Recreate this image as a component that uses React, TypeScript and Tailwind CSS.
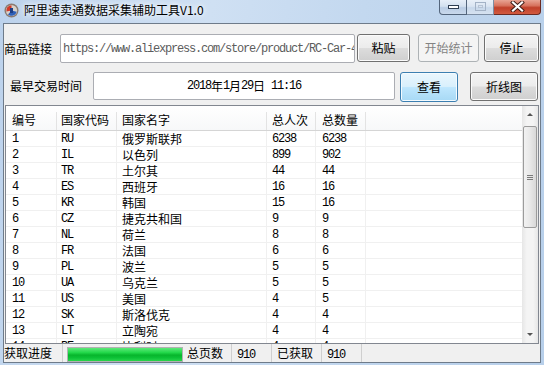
import type { ReactNode } from "react";

const rows = [
  ["1", "RU", "俄罗斯联邦", "6238", "6238"],
  ["2", "IL", "以色列", "899", "902"],
  ["3", "TR", "土尔其", "44", "44"],
  ["4", "ES", "西班牙", "16", "16"],
  ["5", "KR", "韩国", "15", "16"],
  ["6", "CZ", "捷克共和国", "9", "9"],
  ["7", "NL", "荷兰", "8", "8"],
  ["8", "FR", "法国", "6", "6"],
  ["9", "PL", "波兰", "5", "5"],
  ["10", "UA", "乌克兰", "5", "5"],
  ["11", "US", "美国", "4", "5"],
  ["12", "SK", "斯洛伐克", "4", "4"],
  ["13", "LT", "立陶宛", "4", "4"],
  ["14", "BE", "比利时", "4", "4"],
];

const cjk = "font-['Noto_Sans_CJK_SC',sans-serif]";
const mono = "font-['Liberation_Mono','Noto_Sans_CJK_SC',monospace] text-[12px] tracking-[-1.2px]";

const btnNormal =
  "flex items-center justify-center rounded-[3px] border border-[#707070] bg-[linear-gradient(#f4f4f4_0%,#ececec_48%,#dcdcdc_52%,#cfcfcf_100%)] shadow-[inset_0_0_0_1px_#fbfbfb] text-[12px] text-black";

function M({ children }: { children: ReactNode }) {
  return <span className={mono}>{children}</span>;
}

function TitleIcon() {
  return (
    <svg width="15" height="15" viewBox="0 0 15 15">
      <circle cx="7.5" cy="7.5" r="7" fill="#8a7a70" />
      <circle cx="7.5" cy="7.5" r="5.6" fill="#d7d2cc" />
      <path d="M7.5 2.2 A5.3 5.3 0 0 0 2.4 8.6 L7.5 7.5 Z" fill="#d23a2a" />
      <path d="M7.5 7.5 L12.6 8.8 A5.3 5.3 0 0 1 4 11.6 Z" fill="#2e5fb8" />
      <rect x="6" y="5" width="3" height="5" fill="#1e3f86" />
    </svg>
  );
}

function TitleButtons() {
  return (
    <div className="ml-auto mr-[3px] flex self-start">
      <div className="flex h-[15px] w-[28px] items-start justify-center rounded-bl-[4px] border border-t-0 border-[#53657c] bg-[linear-gradient(#e6eef8_0%,#d3e0ef_45%,#b9cce4_55%,#c9d9ec_100%)] pt-[5px]">
        <div className="h-[4px] w-[11px] border border-[#2f3e52] bg-white" />
      </div>
      <div className="flex h-[15px] w-[27px] items-start justify-center border-b border-r border-[#7d8ea4] bg-[linear-gradient(#e9f0f8_0%,#dae5f2_45%,#c8d8eb_55%,#d6e2f0_100%)] pt-[2px]">
        <div className="h-[9px] w-[11px] border border-[#a3b2c6] p-[2px]">
          <div className="h-full w-full border border-[#b7c4d5]" />
        </div>
      </div>
      <div className="flex h-[15px] w-[47px] items-start justify-center rounded-br-[4px] border border-l-0 border-t-0 border-[#6b2a22] bg-[linear-gradient(#e8a493_0%,#d7735e_40%,#c0402a_55%,#d25a3f_100%)] pt-[1px]">
        <svg width="15" height="11" viewBox="0 0 15 11">
          <path d="M3 1.5 L12 9.5 M12 1.5 L3 9.5" stroke="#3b1a14" strokeWidth="4" strokeLinecap="square" />
          <path d="M3 1.5 L12 9.5 M12 1.5 L3 9.5" stroke="#ffffff" strokeWidth="2.2" strokeLinecap="square" />
        </svg>
      </div>
    </div>
  );
}

function ScrollBar() {
  return (
    <div className="flex w-[16px] flex-col bg-[linear-gradient(90deg,#e6e6e6,#f4f4f4_30%,#f4f4f4_70%,#e6e6e6)]">
      <div className="flex h-[17px] items-center justify-center">
        <div className="h-0 w-0 border-x-[3px] border-b-[3px] border-x-transparent border-b-[#555]" />
      </div>
      <div className="mx-[1px] mt-[3px] flex h-[102px] items-center justify-center rounded-[2px] border border-[#9b9b9b] bg-[linear-gradient(90deg,#f2f2f2,#e8e8e8_50%,#d8d8d8)]">
        <div className="flex flex-col gap-[1px]">
          <div className="h-px w-[6px] bg-[#7a7a7a]" />
          <div className="h-px w-[6px] bg-[#7a7a7a]" />
          <div className="h-px w-[6px] bg-[#7a7a7a]" />
        </div>
      </div>
      <div className="flex-1" />
      <div className="flex h-[17px] items-center justify-center">
        <div className="h-0 w-0 border-x-[3px] border-t-[3px] border-x-transparent border-t-[#555]" />
      </div>
    </div>
  );
}

export default function App() {
  return (
    <div className={`flex h-[365px] w-[544px] flex-col overflow-hidden bg-[linear-gradient(100deg,#bcd2ec_0%,#cfe0f3_35%,#c3d8ef_60%,#b7cfea_100%)] ${cjk}`}>
      <div className="flex h-[23px] shrink-0 items-start">
        <div className="ml-[4px] mt-[3px]">
          <TitleIcon />
        </div>
        <div className="ml-[5px] mt-[3px] text-[12px] leading-[14px] text-black [text-shadow:0_0_5px_#fff,0_0_8px_#fff]">
          阿里速卖通数据采集辅助工具V1.0
        </div>
        <TitleButtons />
      </div>

      <div className="mx-[3px] mb-[2px] flex flex-1 flex-col border border-[#6e7b8a] bg-[#f0f0f0] text-[12px] text-black">
        <div className="mt-[10px] flex h-[29px] items-start">
          <div className="flex h-[29px] w-[56px] items-center">商品链接</div>
          <div className="flex h-[29px] w-[295px] items-center overflow-hidden whitespace-nowrap rounded-[2px] border border-[#abadb3] bg-white pl-[2px] text-[#5c5c5c]">
            <M>https://www.aliexpress.com/store/product/RC-Car-4</M>
          </div>
          <div className={`ml-[2px] h-[28px] w-[53px] ${btnNormal}`}>粘贴</div>
          <div className="ml-[8px] flex h-[28px] w-[61px] items-center justify-center rounded-[3px] border border-[#adb2b5] bg-[#f4f4f4] text-[#838383]">
            开始统计
          </div>
          <div className={`ml-[5px] h-[28px] w-[55px] ${btnNormal}`}>停止</div>
        </div>

        <div className="mt-[9px] flex h-[30px] items-start">
          <div className="flex h-[28px] w-[89px] items-center pl-[6px]">最早交易时间</div>
          <div className="flex h-[28px] w-[302px] items-center justify-center rounded-[2px] border border-[#abadb3] bg-white">
            <M>2018</M>年<M>1</M>月<M>29</M>日<M>&nbsp;11:16</M>
          </div>
          <div className="ml-[5px] flex h-[30px] w-[58px] items-center justify-center rounded-[3px] border border-[#3c7fb1] bg-[linear-gradient(#eaf6fd_0%,#d9f0fc_48%,#bee6fd_52%,#a7d9f5_100%)] shadow-[inset_0_0_0_1px_#f4fbff]">
            查看
          </div>
          <div className={`ml-[12px] h-[29px] w-[68px] ${btnNormal}`}>折线图</div>
        </div>

        <div className="ml-[1px] mt-[3px] flex h-[239px] w-[534px] border border-[#828790] bg-white">
          <div className="flex flex-1 flex-col overflow-hidden">
            <div className="flex h-[25px] shrink-0 border-b border-[#d5d5d5] bg-[linear-gradient(#ffffff,#f7f8f9)] pt-[6px] leading-[16px]">
              <div className="w-[51px] border-r border-[#e3e3e3] pl-[6px]">编号</div>
              <div className="w-[60px] border-r border-[#e3e3e3] pl-[4px]">国家代码</div>
              <div className="w-[150px] border-r border-[#e3e3e3] pl-[5px]">国家名字</div>
              <div className="w-[49px] border-r border-[#e3e3e3] pl-[5px]">总人次</div>
              <div className="w-[50px] border-r border-[#e3e3e3] pl-[6px]">总数量</div>
              <div className="flex-1" />
            </div>
            {rows.map((row) => (
              <div key={row[0]} className="flex h-[16px] shrink-0 border-b border-[#f0f0f0] leading-[15px]">
                <div className={`w-[51px] border-r border-[#f0f0f0] pl-[6px] pt-[1px] ${mono}`}>{row[0]}</div>
                <div className={`w-[60px] border-r border-[#f0f0f0] pl-[4px] pt-[1px] ${mono}`}>{row[1]}</div>
                <div className="w-[150px] border-r border-[#f0f0f0] pl-[5px]">{row[2]}</div>
                <div className={`w-[49px] border-r border-[#f0f0f0] pl-[5px] pt-[1px] ${mono}`}>{row[3]}</div>
                <div className={`w-[50px] border-r border-[#f0f0f0] pl-[6px] pt-[1px] ${mono}`}>{row[4]}</div>
                <div className="flex-1" />
              </div>
            ))}
          </div>
          <ScrollBar />
        </div>

        <div className="flex h-[18px] items-stretch leading-[18px]">
          <div className="w-[59px] border-r border-[#cfcfcf]">获取进度</div>
          <div className="ml-[4px] mt-[3px] w-[116px] border border-[#b2b2b2] bg-[linear-gradient(#5ee87a_0%,#22d84a_35%,#07b52c_55%,#0cc136_75%,#28d64c_100%)]" />
          <div className="w-[49px] border-r border-[#cfcfcf] pl-[4px]">总页数</div>
          <div className="w-[40px] border-r border-[#cfcfcf] pl-[5px]">
            <M>910</M>
          </div>
          <div className="w-[50px] border-r border-[#cfcfcf] pl-[5px]">已获取</div>
          <div className="w-[40px] border-r border-[#cfcfcf] pl-[5px]">
            <M>910</M>
          </div>
          <div className="flex-1" />
        </div>
      </div>
    </div>
  );
}
